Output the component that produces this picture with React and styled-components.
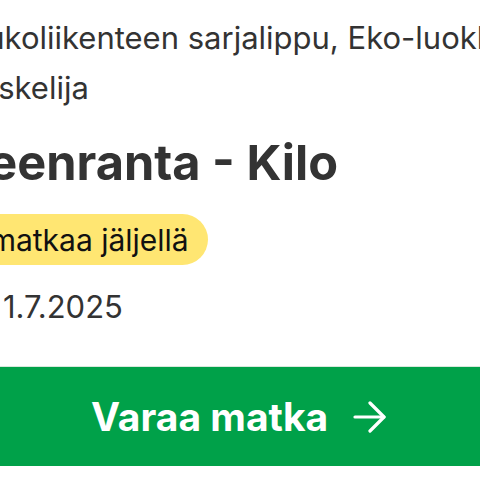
import React from 'react';
import styled, { createGlobalStyle } from 'styled-components';

const GlobalStyle = createGlobalStyle`
  html, body {
    margin: 0;
    padding: 0;
    background: #fff;
    overflow: hidden;
  }
  body {
    font-family: Inter, "Noto Sans", Arial, sans-serif;
    color: #333;
  }
`;

const Viewport = styled.div`
  width: 480px;
  height: 480px;
  overflow: hidden;
`;

const Card = styled.div`
  width: 640px;
  margin-left: -49px;
  padding-top: 13px;
  display: flex;
  flex-direction: column;
  align-items: flex-start;
`;

const Description = styled.p`
  margin: 0 0 0 -3px;
  width: 600px;
  font-size: 31px;
  line-height: 50px;
  color: #333;
`;

const Title = styled.h2`
  margin: 20px 0 0 -80px;
  font-size: 48.7px;
  line-height: 60px;
  font-weight: 700;
  color: #333;
`;

const Badge = styled.span`
  margin-top: 21px;
  height: 51px;
  display: inline-flex;
  align-items: center;
  padding: 0 19px 0 12px;
  border-radius: 26px;
  background: #ffe672;
  color: #111;
  font-size: 30px;
`;

const Validity = styled.div`
  margin: 22px 0 0 52px;
  font-size: 31px;
  line-height: 40px;
  color: #333;
`;

const BookButton = styled.button`
  margin-top: 39px;
  width: 100%;
  height: 100px;
  border: none;
  border-top: 1px solid #d8e8dc;
  background: #00a149;
  color: #fff;
  font-family: inherit;
  font-size: 39px;
  font-weight: 700;
  display: flex;
  align-items: center;
  justify-content: flex-start;
  padding: 0 0 0 140px;
  gap: 25px;
`;

const ArrowIcon = () => (
  <svg width="34" height="32" viewBox="0 0 34 32" fill="none" stroke="#fff" strokeWidth="3.2" strokeLinecap="round" strokeLinejoin="round">
    <path d="M2 16H31" />
    <path d="M17 2L31 16L17 30" />
  </svg>
);

export default function App() {
  return (
    <>
      <GlobalStyle />
      <Viewport>
        <Card>
          <Description>Kaukoliikenteen sarjalippu, Eko-luokka, Opiskelija</Description>
          <Title>Lappeenranta - Kilo</Title>
          <Badge>5 matkaa jäljellä</Badge>
          <Validity>1.7.2025</Validity>
          <BookButton>
            Varaa matka
            <ArrowIcon />
          </BookButton>
        </Card>
      </Viewport>
    </>
  );
}
